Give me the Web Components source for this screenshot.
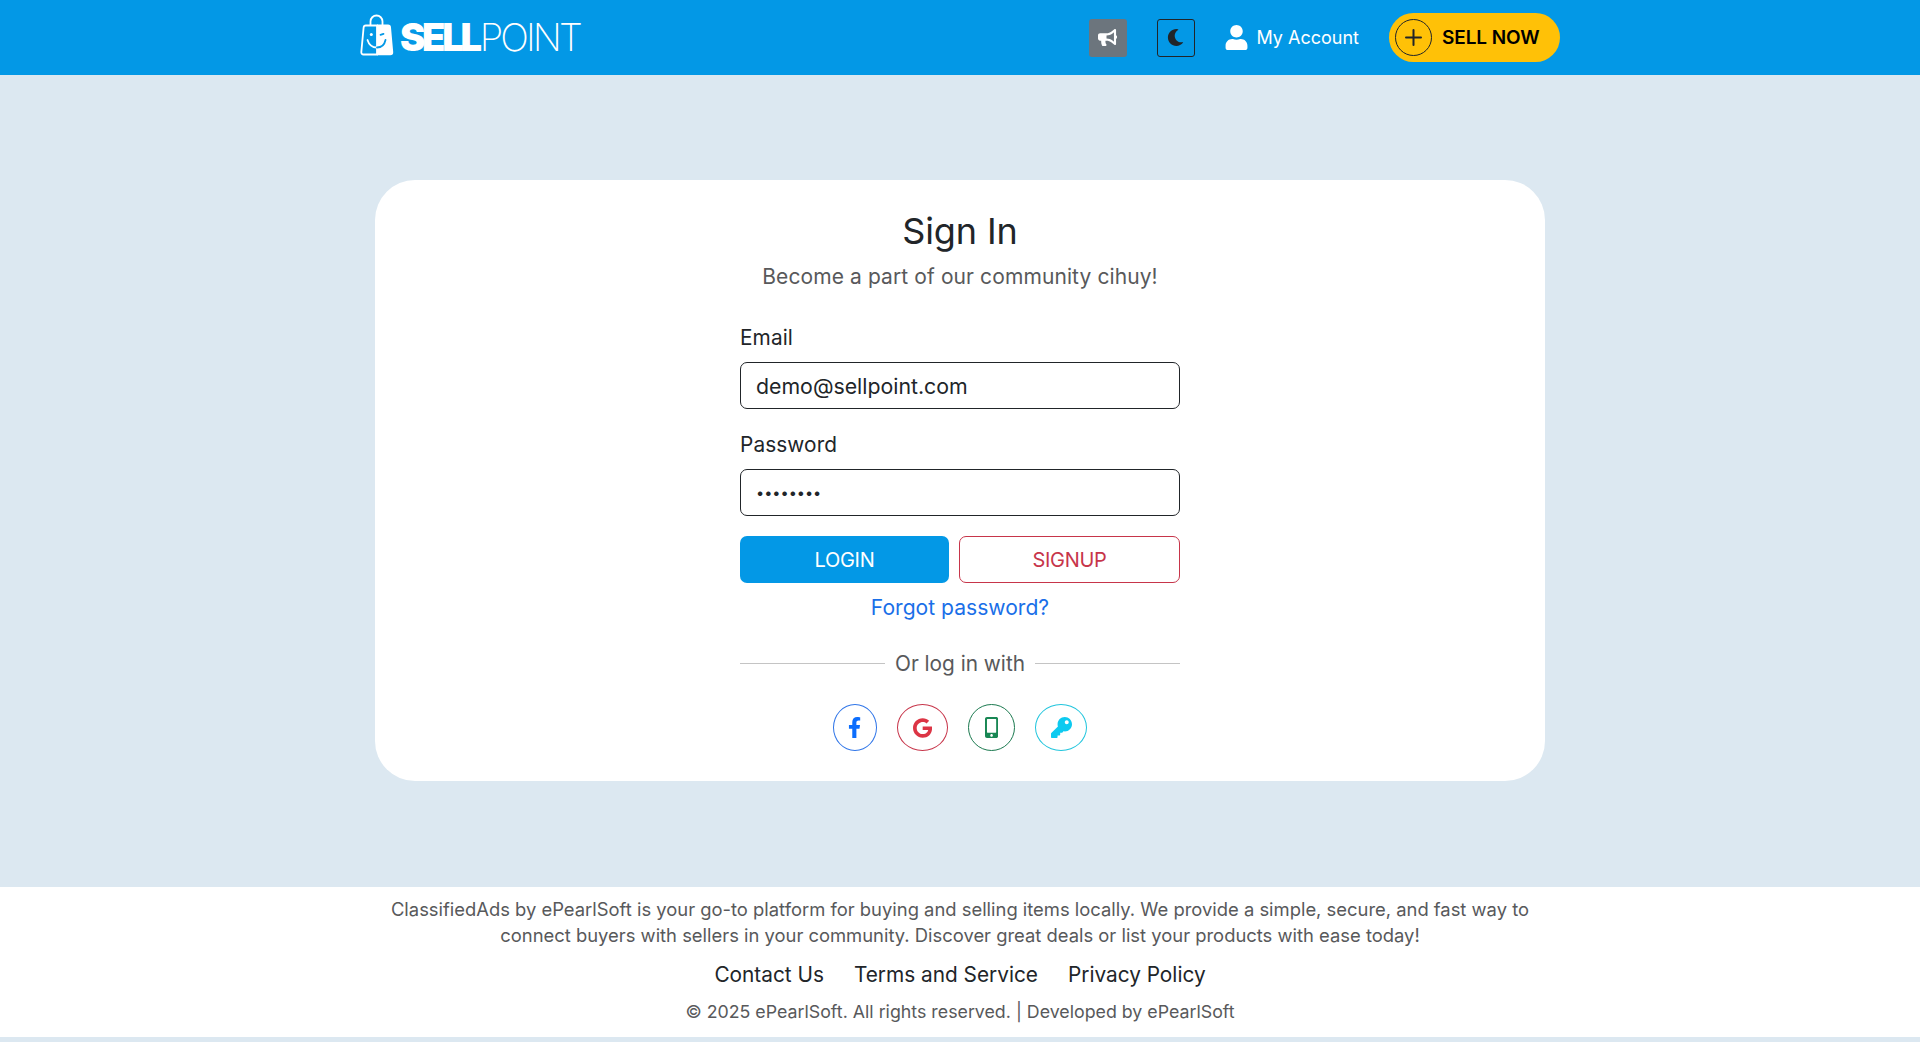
<!DOCTYPE html>
<html lang="en"><head><meta charset="utf-8"><title>SellPoint - Sign In</title>
<style>
html,body{margin:0;height:100%}
body{background:#dce8f1;font-family:Inter,"Noto Sans",sans-serif;color:#212529;display:flex;flex-direction:column;height:1042px;overflow:hidden}
</style></head><body>
<sp-header></sp-header>
<sp-main><sp-login></sp-login></sp-main>
<sp-footer></sp-footer>
<script>
const I={
user:['0 0 448 512','M224 256c70.7 0 128-57.3 128-128S294.7 0 224 0 96 57.3 96 128s57.3 128 128 128zm89.6 32h-16.7c-22.2 10.2-46.9 16-72.9 16s-50.6-5.8-72.9-16h-16.7C60.2 288 0 348.2 0 422.4V464c0 26.5 21.5 48 48 48h352c26.5 0 48-21.5 48-48v-41.6c0-74.2-60.2-134.4-134.4-134.4z'],
moon:['0 0 512 512','M283.211 512c78.962 0 151.079-35.925 198.857-94.792 7.068-8.708-.639-21.43-11.562-19.35-124.203 23.654-238.262-71.576-238.262-196.954 0-72.222 38.662-138.635 101.498-174.394 9.686-5.512 7.25-20.197-3.756-22.23A258.156 258.156 0 0 0 283.211 0c-141.309 0-256 114.511-256 256 0 141.309 114.511 256 256 256z'],
horn:['0 0 576 512','M576 240c0-23.63-12.95-44.04-32-55.12V32.01C544 23.26 537.02 0 512 0c-7.12 0-14.19 2.38-19.98 7.02l-85.03 68.03C364.28 109.19 310.66 128 256 128H64c-35.35 0-64 28.65-64 64v96c0 35.35 28.65 64 64 64h33.7c-1.39 10.48-2.18 21.14-2.18 32 0 39.77 9.26 77.35 25.56 110.94 5.19 10.69 16.52 17.06 28.4 17.06h74.28c26.05 0 41.69-29.84 25.9-50.56-16.4-21.52-26.15-48.36-26.15-77.44 0-11.11 1.62-21.79 4.41-32H256c54.66 0 108.28 18.81 150.98 52.95l85.03 68.03a32.023 32.023 0 0 0 19.98 7.02c24.92 0 32-22.78 32-32V295.13C563.05 284.04 576 263.63 576 240zm-96 141.42l-33.05-26.44C392.95 311.78 325.12 288 256 288v-96c69.12 0 136.95-23.78 190.95-66.98L480 98.58v282.84z'],
fb:['0 0 320 512','M279.14 288l14.22-92.66h-88.91v-60.13c0-25.35 12.42-50.06 52.24-50.06h40.42V6.26S260.43 0 225.36 0c-73.22 0-121.08 44.38-121.08 124.72v70.62H22.89V288h81.39v224h100.17V288z'],
google:['0 0 488 512','M488 261.8C488 403.3 391.1 504 248 504 110.8 504 0 393.2 0 256S110.8 8 248 8c66.8 0 123 24.5 166.3 64.9l-67.5 64.9C258.5 52.6 94.3 116.6 94.3 256c0 86.5 69.1 156.6 153.7 156.6 98.2 0 135-70.4 140.8-106.9H248v-85.3h236.1c2.3 12.7 3.9 24.9 3.9 41.4z'],
mobile:['0 0 320 512','M272 0H48C21.5 0 0 21.5 0 48v416c0 26.5 21.5 48 48 48h224c26.5 0 48-21.5 48-48V48c0-26.5-21.5-48-48-48zM160 480c-17.7 0-32-14.3-32-32s14.3-32 32-32 32 14.3 32 32-14.3 32-32 32zm112-108c0 6.6-5.4 12-12 12H60c-6.6 0-12-5.4-12-12V60c0-6.6 5.4-12 12-12h200c6.6 0 12 5.4 12 12v312z'],
key:['0 0 512 512','M512 176.001C512 273.203 433.202 352 336 352c-11.22 0-22.19-1.062-32.827-3.069l-24.012 27.014A23.999 23.999 0 0 1 261.223 384H224v40c0 13.255-10.745 24-24 24h-40v40c0 13.255-10.745 24-24 24H24c-13.255 0-24-10.745-24-24v-78.059c0-6.365 2.529-12.47 7.029-16.971l161.802-161.802C163.108 213.814 160 195.271 160 176 160 78.798 238.797.001 335.999 0 433.488-.001 512 78.511 512 176.001zM336 128c0 26.51 21.49 48 48 48s48-21.49 48-48-21.49-48-48-48-48 21.49-48 48z']
};
const svg=(n,h,c='currentColor',w)=>{const[v,d]=I[n];const[, ,vw,vh]=v.split(' ');return `<svg viewBox="${v}" height="${h}" width="${w||h*vw/vh}" fill="${c}" style="display:block"><path d="${d}"/></svg>`};
class Base extends HTMLElement{constructor(){super();this.attachShadow({mode:'open'}).innerHTML=this.render()}}
customElements.define('sp-logo',class extends Base{render(){return `<style>
:host{display:flex;align-items:center;color:#fff;line-height:1}
svg{display:block;margin-right:6px;margin-top:-5px}
b{font-family:Inter,sans-serif;font-weight:900;font-size:38px;letter-spacing:-3.2px;margin-bottom:2px}
span{font-family:Inter,sans-serif;font-weight:200;font-size:38px;letter-spacing:-2.9px;margin-left:1px;margin-bottom:2px}
</style>
<svg width="34" height="42" viewBox="0 0 34 42" fill="none"><path d="M10.5 12V7.5a6 6 0 0 1 12 0V12" stroke="#fff" stroke-width="1.8"/><path d="M6 11.5h11v29H3.5a2.2 2.2 0 0 1-2.2-2.4L3.6 13.6A2.3 2.3 0 0 1 6 11.5z" stroke="#fff" stroke-width="1.8"/><path d="M17 10.6h11a3 3 0 0 1 3 2.8l2.2 24.7a3 3 0 0 1-3 3.2H17z" fill="#fff"/><circle cx="11.3" cy="20.5" r="1.5" fill="#fff"/><path d="M7.5 26c1.5 5 5.500 7.500 9.500 7.500" stroke="#fff" stroke-width="1.800" stroke-linecap="round"/><path d="M17 33.500c4 0 7.500-2.800 8.500-7.500" stroke="#0398e6" stroke-width="1.800" stroke-linecap="round"/><path d="M20.500 20.800l3 -1" stroke="#0398e6" stroke-width="1.800" stroke-linecap="round"/></svg>
<b>SELL</b><span>POINT</span>`}});
customElements.define('sp-header',class extends Base{render(){return `<style>
:host{display:block;background:#0398e6;height:75px;flex:none}
.c{width:1200px;height:100%;margin:0 auto;display:flex;align-items:center;font-family:Inter,sans-serif}
sp-logo{margin-right:auto}
.ib{width:38px;height:38px;box-sizing:border-box;border-radius:3px;display:flex;align-items:center;justify-content:center}
.horn{background:#6c757d;margin-right:30px}
.moon{border:1px solid #212529;margin-right:30px}
.acct{display:flex;align-items:center;color:#fff;font-size:18px;margin-right:30px}
.acct svg{margin-right:9px}
.sell{width:171px;height:49px;border-radius:25px;background:#ffc107;display:flex;align-items:center;color:#000;font-weight:600;font-size:19px;letter-spacing:-.1px;box-sizing:border-box;padding-left:6px}
.plus{width:37px;height:37px;border:1px solid #212529;border-radius:50%;box-sizing:border-box;display:flex;align-items:center;justify-content:center;margin-right:10px}
</style><div class="c"><sp-logo></sp-logo>
<div class="ib horn">${svg('horn',17,'#fff')}</div>
<div class="ib moon">${svg('moon',17,'#212529')}</div>
<div class="acct">${svg('user',25,'#fff',23)}<span>My Account</span></div>
<div class="sell"><div class="plus"><svg width="19" height="19" viewBox="0 0 19 19" stroke="#212529" stroke-width="2" stroke-linecap="round" style="display:block"><path d="M9.500 2v15M2 9.500h15"/></svg></div><span>SELL NOW</span></div>
</div>`}});
customElements.define('sp-main',class extends Base{render(){return `<style>
:host{display:flex;justify-content:center;align-items:flex-start;box-sizing:border-box;height:812px;padding-top:105px;flex:none}
</style><slot></slot>`}});
customElements.define('sp-field',class extends Base{render(){const p=this.getAttribute('type')==='password';return `<style>
:host{display:block}
label{display:block;font-size:20.800px;line-height:24px;color:#212529;margin-bottom:12px;padding-top:1px;letter-spacing:.1px}
input{display:block;width:100%;box-sizing:border-box;height:47px;border:1px solid #212529;border-radius:7px;padding:0 15px;font:400 ${p?'14.5px':'21.3px'} Inter,sans-serif;color:#212529;background:#fff;outline:0}
</style><label>${this.getAttribute('label')}</label><input type="${p?'password':'text'}" value="${this.getAttribute('value')}">`}});
customElements.define('sp-social',class extends Base{render(){const c=this.getAttribute('color');return `<style>
:host{display:flex;align-items:center;justify-content:center;box-sizing:border-box;height:47px;border:1px solid ${c};border-radius:50%;width:${this.getAttribute('w')}px;color:${this.getAttribute('ic')||c}}
</style>${svg(this.getAttribute('icon'),+this.getAttribute('h'))}`}});
customElements.define('sp-login',class extends Base{render(){return `<style>
:host{display:block;box-sizing:border-box;width:1170px;height:601px;background:#fff;border-radius:40px;padding-top:24px}
.f{width:440px;margin:0 auto}
.head{text-align:center;margin-bottom:34px}
h2{margin:0;font-weight:400;font-size:36px;line-height:54px;color:#212529;letter-spacing:-.1px}
.sub{margin-top:5px;font-size:21px;line-height:28px;color:#58595b;letter-spacing:.1px}
sp-field+sp-field{margin-top:23px}
.btns{display:flex;gap:10px;margin-top:20px}
.btn{height:47px;box-sizing:border-box;border-radius:7px;display:flex;align-items:center;justify-content:center;font-size:20px;letter-spacing:-.3px}
.l{width:209px;background:#0398e6;color:#fff}
.s{width:221px;border:1px solid #c7354a;color:#c7354a}
.fp{display:block;text-align:center;margin-top:11px;font-size:21.100px;line-height:27px;color:#1a6fe8}
.div{display:flex;align-items:center;gap:10px;margin-top:29px;font-size:20.800px;line-height:27px;color:#58595b}
.div i{flex:1;height:1px;background:#c4c4c4;margin-top:-1px}
.soc{display:flex;justify-content:center;margin-top:27px;gap:20px}
</style><div class="head"><h2>Sign In</h2><div class="sub">Become a part of our community cihuy!</div></div>
<div class="f">
<sp-field label="Email" value="demo@sellpoint.com"></sp-field>
<sp-field label="Password" type="password" value="password"></sp-field>
<div class="btns"><div class="btn l">LOGIN</div><div class="btn s">SIGNUP</div></div>
<a class="fp">Forgot password?</a>
<div class="div"><i></i><span>Or log in with</span><i></i></div>
<div class="soc">
<sp-social color="#2f75e8" ic="#0d6efd" w="44" icon="fb" h="21"></sp-social>
<sp-social color="#c7354a" ic="#dc3545" w="51" icon="google" h="20"></sp-social>
<sp-social color="#1c7a50" ic="#198754" w="47" icon="mobile" h="21"></sp-social>
<sp-social color="#21c5dd" ic="#0dcaf0" w="52" icon="key" h="21"></sp-social>
</div></div>`}});
customElements.define('sp-footer',class extends Base{render(){return `<style>
:host{display:block;background:#fff;height:150px;flex:none;text-align:center;box-sizing:border-box;padding-top:10px}
p{margin:0;font-size:18.400px;line-height:25.500px;color:#58595b}
.links{display:flex;justify-content:center;gap:30px;margin-top:13px;font-size:20.800px;line-height:27px;color:#212529}
.copy{margin-top:10px;line-height:27px;font-size:17.800px}
</style><p>ClassifiedAds by ePearlSoft is your go-to platform for buying and selling items locally. We provide a simple, secure, and fast way to<br>connect buyers with sellers in your community. Discover great deals or list your products with ease today!</p>
<div class="links"><span>Contact Us</span><span>Terms and Service</span><span>Privacy Policy</span></div>
<p class="copy">© 2025 ePearlSoft. All rights reserved. | Developed by ePearlSoft</p>`}});
</script>
</body></html>
